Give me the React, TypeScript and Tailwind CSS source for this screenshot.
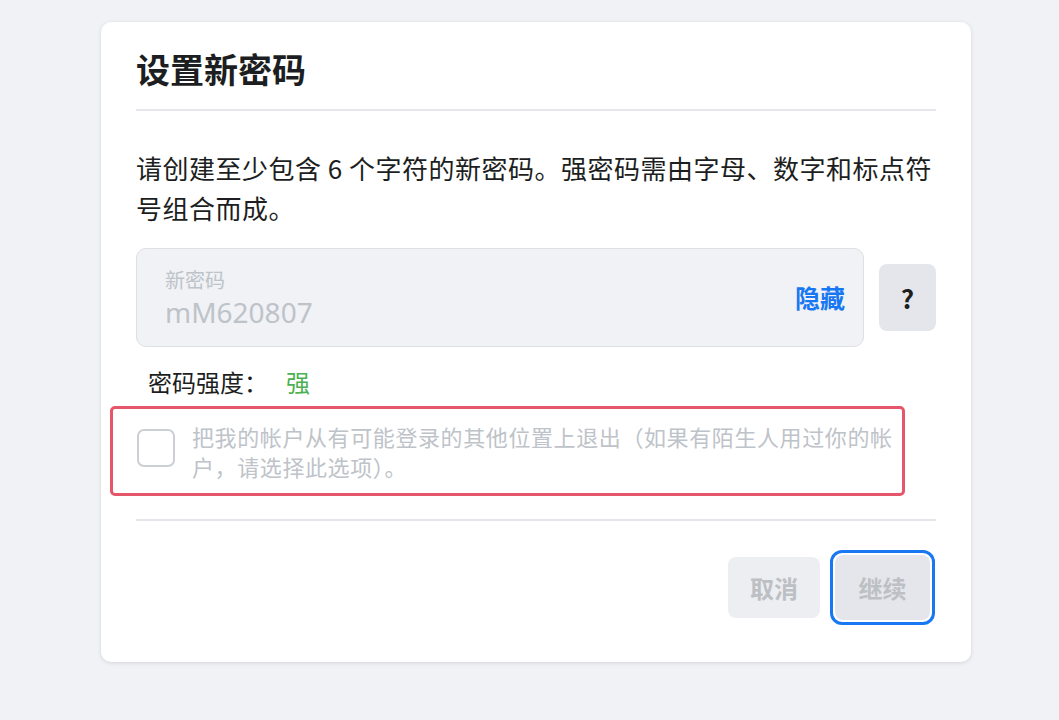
export default function App() {
    return (
        <div
            className="min-h-[720px] w-full bg-[#f0f2f5] pt-[22px] pl-[101px]"
            style={{ fontFamily: '"Noto Sans CJK SC", "Noto Sans", sans-serif' }}
        >
            <div className="w-[870px] h-[640px] bg-white rounded-[10px] shadow-[0_1px_4px_rgba(0,0,0,0.12)] px-[35px] pt-[26px]">
                <h1 className="text-[34px] leading-[42px] font-bold text-[#1c1e21]">设置新密码</h1>
                <div className="mt-[19px] h-[2px] bg-[#e4e6eb]" />

                <p className="mt-[37px] text-[26px] leading-[40px] tracking-[0.5px] text-[#1c1e21]">
                    请创建至少包含 6 个字符的新密码。强密码需由字母、数字和标点符号组合而成。
                </p>

                <div className="mt-[20px] flex items-center gap-[15px]">
                    <div className="flex-1 h-[99px] rounded-[10px] bg-[#f0f2f5] border border-[#dddfe2] flex items-center pl-[28px] pr-[18px]">
                        <div className="flex-1 flex flex-col">
                            <span className="text-[20px] leading-[26px] text-[#bec3c9]">新密码</span>
                            <span className="mt-[2px] text-[28px] leading-[34px] text-[#bec3c9]" style={{ fontFamily: '"Noto Sans", sans-serif' }}>
                                mM620807
                            </span>
                        </div>
                        <span className="text-[25px] font-bold text-[#1877f2]">隐藏</span>
                    </div>
                    <div className="w-[57px] h-[67px] rounded-[8px] bg-[#e4e6eb] flex items-center justify-center text-[26px] font-bold text-[#1c1e21]">
                        ?
                    </div>
                </div>

                <div className="mt-[19px] pl-[12px] text-[24px] leading-[32px] text-[#1c1e21]">
                    密码强度：<span className="ml-[18px] text-[#4cb050]">强</span>
                </div>

                <div className="mt-[8px] -ml-[26px] w-[795px] h-[90px] border-[3px] border-[#e5566a] rounded-[5px] flex items-start pl-[24px] pt-[12px]">
                    <div className="mt-[8px] w-[38px] h-[38px] shrink-0 rounded-[7px] border-2 border-[#ccd0d5]" />
                    <p className="ml-[17px] text-[22px] leading-[30px] tracking-[0.6px] text-[#bec3c9]">
                        把我的帐户从有可能登录的其他位置上退出（如果有陌生人用过你的帐户，请选择此选项）。
                    </p>
                </div>

                <div className="mt-[23px] h-[2px] bg-[#e4e6eb]" />

                <div className="mt-[29px] flex justify-end items-center gap-[10px] pr-[1px]">
                    <div className="w-[92px] h-[61px] rounded-[8px] bg-[#eceef1] flex items-center justify-center text-[24px] font-bold text-[#bcc0c4]">
                        取消
                    </div>
                    <div className="w-[105px] h-[75px] rounded-[12px] border-[3px] border-[#1877f2] p-[2px]">
                        <div className="w-full h-full rounded-[8px] bg-[#e4e6eb] flex items-center justify-center text-[24px] font-bold text-[#bcc0c4]">
                            继续
                        </div>
                    </div>
                </div>
            </div>
        </div>
    );
}
